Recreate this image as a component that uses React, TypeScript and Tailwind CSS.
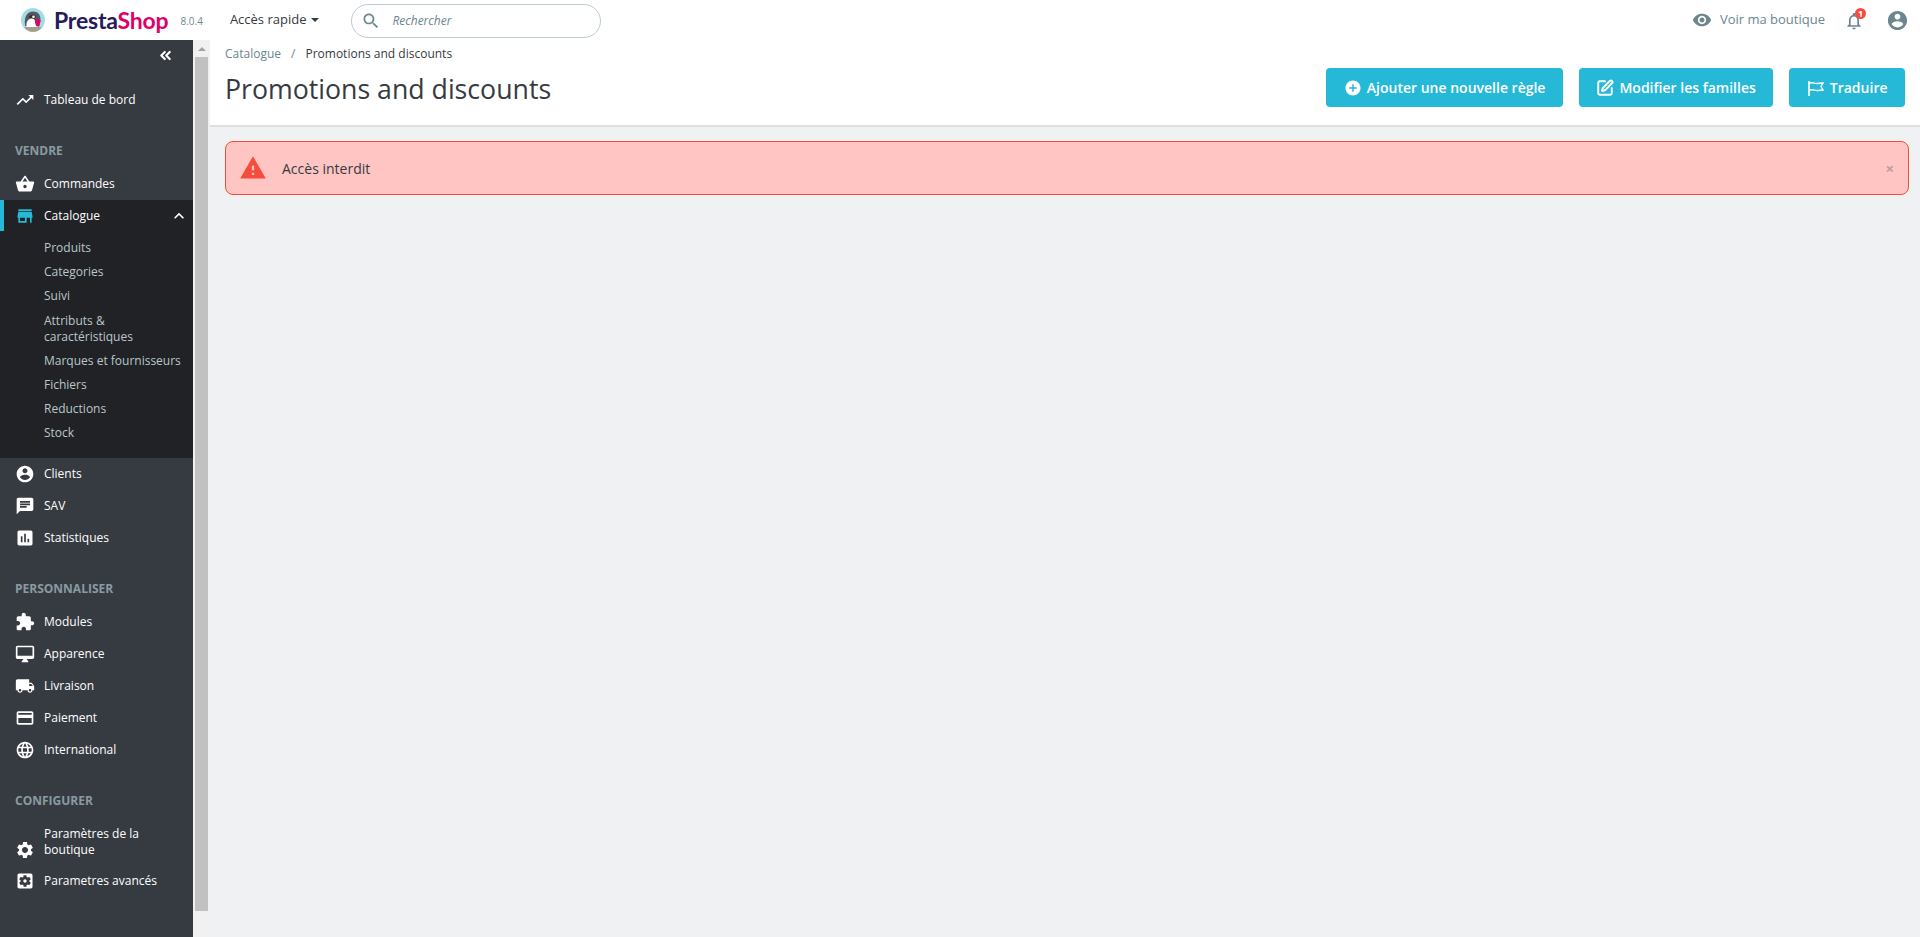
import { ChevronsLeft, SquarePen } from 'lucide-react';

const P = {
  trending: 'M16 6l2.29 2.29-4.88 4.88-4-4L2 16.59 3.41 18l6-6 4 4 6.3-6.29L22 12V6z',
  basket: 'M17.21 9l-4.38-6.56c-.19-.28-.51-.42-.83-.42-.32 0-.64.14-.83.43L6.79 9H2c-.55 0-1 .45-1 1 0 .09.01.18.04.27l2.54 9.27c.23.84 1 1.46 1.92 1.46h13c.92 0 1.69-.62 1.93-1.46l2.54-9.27L23 10c0-.55-.45-1-1-1h-4.79zM9 9l3-4.4L15 9H9zm3 8c-1.1 0-2-.9-2-2s.9-2 2-2 2 .9 2 2-.9 2-2 2z',
  store: 'M20 4H4v2h16V4zm1 10v-2l-1-5H4l-1 5v2h1v6h10v-6h4v6h2v-6h1zm-9 4H6v-4h6v4z',
  account: 'M12 2C6.48 2 2 6.48 2 12s4.48 10 10 10 10-4.48 10-10S17.52 2 12 2zm0 3c1.66 0 3 1.34 3 3s-1.34 3-3 3-3-1.34-3-3 1.34-3 3-3zm0 14.2c-2.5 0-4.71-1.28-6-3.22.03-1.99 4-3.08 6-3.08 1.99 0 5.97 1.09 6 3.08-1.29 1.94-3.5 3.22-6 3.22z',
  chat: 'M20 2H4c-1.1 0-1.99.9-1.99 2L2 22l4-4h14c1.1 0 2-.9 2-2V4c0-1.1-.9-2-2-2zM6 9h12v2H6V9zm8 5H6v-2h8v2zm4-6H6V6h12v2z',
  stats: 'M19 3H5c-1.1 0-2 .9-2 2v14c0 1.1.9 2 2 2h14c1.1 0 2-.9 2-2V5c0-1.1-.9-2-2-2zM9 17H7v-7h2v7zm4 0h-2V7h2v10zm4 0h-2v-4h2v4z',
  puzzle: 'M20.5 11H19V7c0-1.1-.9-2-2-2h-4V3.5C13 2.12 11.88 1 10.5 1S8 2.12 8 3.5V5H4c-1.1 0-1.99.9-1.99 2v3.8H3.5c1.49 0 2.7 1.21 2.7 2.7s-1.21 2.7-2.7 2.7H2V20c0 1.1.9 2 2 2h3.8v-1.5c0-1.49 1.21-2.7 2.7-2.7 1.49 0 2.7 1.21 2.7 2.7V22H17c1.1 0 2-.9 2-2v-4h1.5c1.38 0 2.5-1.12 2.5-2.5S21.88 11 20.5 11z',
  desktop: 'M21 2H3c-1.1 0-2 .9-2 2v12c0 1.1.9 2 2 2h7l-2 3v1h8v-1l-2-3h7c1.1 0 2-.9 2-2V4c0-1.1-.9-2-2-2zm0 12H3V4h18v10z',
  truck: 'M20 8h-3V4H3c-1.1 0-2 .9-2 2v11h2c0 1.66 1.34 3 3 3s3-1.34 3-3h6c0 1.66 1.34 3 3 3s3-1.34 3-3h2v-5l-3-4zM6 18.5c-.83 0-1.5-.67-1.5-1.5s.67-1.5 1.5-1.5 1.5.67 1.5 1.5-.67 1.5-1.5 1.5zm13.5-9l1.96 2.5H17V9.5h2.5zm-1.5 9c-.83 0-1.5-.67-1.5-1.5s.67-1.5 1.5-1.5 1.5.67 1.5 1.5-.67 1.5-1.5 1.5z',
  card: 'M20 4H4c-1.11 0-1.99.89-1.99 2L2 18c0 1.11.89 2 2 2h16c1.11 0 2-.89 2-2V6c0-1.11-.89-2-2-2zm0 14H4v-6h16v6zm0-10H4V6h16v2z',
  globe: 'M11.99 2C6.47 2 2 6.48 2 12s4.47 10 9.99 10C17.52 22 22 17.52 22 12S17.52 2 11.99 2zm6.93 6h-2.95c-.32-1.25-.78-2.45-1.38-3.56 1.84.63 3.37 1.91 4.33 3.56zM12 4.04c.83 1.2 1.48 2.53 1.91 3.96h-3.82c.43-1.43 1.08-2.76 1.91-3.96zM4.26 14C4.1 13.36 4 12.69 4 12s.1-1.36.26-2h3.38c-.08.66-.14 1.32-.14 2 0 .68.06 1.34.14 2H4.26zm.82 2h2.95c.32 1.25.78 2.45 1.38 3.56-1.84-.63-3.37-1.9-4.33-3.56zm2.95-8H5.08c.96-1.66 2.49-2.93 4.33-3.56C8.81 5.55 8.35 6.75 8.03 8zM12 19.96c-.83-1.2-1.48-2.53-1.91-3.96h3.82c-.43 1.43-1.08 2.76-1.91 3.96zM14.34 14H9.66c-.09-.66-.16-1.32-.16-2 0-.68.07-1.35.16-2h4.68c.09.65.16 1.32.16 2 0 .68-.07 1.34-.16 2zm.25 5.56c.6-1.11 1.06-2.31 1.38-3.56h2.95c-.96 1.65-2.49 2.93-4.33 3.56zM16.36 14c.08-.66.14-1.32.14-2 0-.68-.06-1.34-.14-2h3.38c.16.64.26 1.31.26 2s-.1 1.36-.26 2h-3.38z',
  gear: 'M19.14 12.94c.04-.3.06-.61.06-.94 0-.32-.02-.64-.07-.94l2.03-1.58c.18-.14.23-.41.12-.61l-1.92-3.32c-.12-.22-.37-.29-.59-.22l-2.39.96c-.5-.38-1.03-.7-1.62-.94l-.36-2.54c-.04-.24-.24-.41-.48-.41h-3.84c-.24 0-.43.17-.47.41l-.36 2.54c-.59.24-1.13.57-1.62.94l-2.39-.96c-.22-.08-.47 0-.59.22L2.74 8.87c-.12.21-.08.47.12.61l2.03 1.58c-.05.3-.09.63-.09.94s.02.64.07.94l-2.03 1.58c-.18.14-.23.41-.12.61l1.92 3.32c.12.22.37.29.59.22l2.39-.96c.5.38 1.03.7 1.62.94l.36 2.54c.05.24.24.41.48.41h3.84c.24 0 .44-.17.47-.41l.36-2.54c.59-.24 1.13-.56 1.62-.94l2.39.96c.22.08.47 0 .59-.22l1.92-3.32c.12-.22.07-.47-.12-.61l-2.01-1.58zM12 15.6c-1.98 0-3.6-1.62-3.6-3.6s1.62-3.6 3.6-3.6 3.6 1.62 3.6 3.6-1.62 3.6-3.6 3.6z',
  gearBox: 'M12 10c-1.1 0-2 .9-2 2s.9 2 2 2 2-.9 2-2-.9-2-2-2zm7-7H5c-1.11 0-2 .89-2 2v14c0 1.11.89 2 2 2h14c1.11 0 2-.89 2-2V5c0-1.11-.89-2-2-2zm-1.75 9c0 .23-.02.46-.05.68l1.48 1.16c.13.11.17.3.08.45l-1.4 2.42c-.09.15-.27.21-.43.15l-1.74-.7c-.36.28-.76.51-1.18.69l-.26 1.85c-.03.17-.18.3-.35.3h-2.8c-.17 0-.32-.13-.35-.29l-.26-1.85c-.43-.18-.82-.41-1.18-.69l-1.74.7c-.16.06-.34 0-.43-.15l-1.4-2.42c-.09-.15-.05-.34.08-.45l1.48-1.16c-.03-.23-.05-.46-.05-.69 0-.23.02-.46.05-.68l-1.48-1.16c-.13-.11-.17-.3-.08-.45l1.4-2.42c.09-.15.27-.21.43-.15l1.74.7c.36-.28.76-.51 1.18-.69l.26-1.85c.03-.17.18-.3.35-.3h2.8c.17 0 .32.13.35.29l.26 1.85c.43.18.82.41 1.18.69l1.74-.7c.16-.06.34 0 .43.15l1.4 2.42c.09.15.05.34-.08.45l-1.48 1.16c.03.23.05.46.05.69z',
  eye: 'M12 4.5C7 4.5 2.73 7.61 1 12c1.73 4.39 6 7.5 11 7.5s9.27-3.11 11-7.5c-1.73-4.39-6-7.5-11-7.5zM12 17c-2.76 0-5-2.24-5-5s2.24-5 5-5 5 2.24 5 5-2.24 5-5 5zm0-8c-1.66 0-3 1.34-3 3s1.34 3 3 3 3-1.34 3-3-1.34-3-3-3z',
  bell: 'M12 22c1.1 0 2-.9 2-2h-4c0 1.1.9 2 2 2zm6-6v-5c0-3.07-1.63-5.64-4.5-6.32V4c0-.83-.67-1.5-1.5-1.5s-1.5.67-1.5 1.5v.68C7.64 5.36 6 7.92 6 11v5l-2 2v1h16v-1l-2-2zm-2 1H8v-6c0-2.48 1.51-4.5 4-4.5s4 2.02 4 4.5v6z',
  plus: 'M12 2C6.48 2 2 6.48 2 12s4.48 10 10 10 10-4.48 10-10S17.52 2 12 2zm5 11h-4v4h-2v-4H7v-2h4V7h2v4h4v2z',
  warning: 'M1 21h22L12 2 1 21zm12-3h-2v-2h2v2zm0-4h-2v-4h2v4z',
  search: 'M15.5 14h-.79l-.28-.27C15.41 12.59 16 11.11 16 9.5 16 5.91 13.09 3 9.5 3S3 5.91 3 9.5 5.91 16 9.5 16c1.61 0 3.09-.59 4.23-1.57l.27.28v.79l5 4.99L20.49 19l-4.99-5zm-6 0C7.01 14 5 11.99 5 9.5S7.01 5 9.5 5 14 7.01 14 9.5 11.99 14 9.5 14z',
  less: 'M12 8l-6 6 1.41 1.41L12 10.83l4.59 4.58L18 14z',
};

function Icon({ d, className }: { d: string; className?: string }) {
  return (
    <svg viewBox="0 0 24 24" fill="currentColor" className={className}>
      <path d={d} />
    </svg>
  );
}

// penguin badge of the logo
function Logo() {
  return (
    <svg viewBox="0 0 24 24" className="w-[24px] h-[24px] shrink-0">
      <circle cx="12" cy="12" r="12" fill="#a4dbe8" />
      <path d="M4 17C3 9 6 3.5 12 3.5c5 0 7.5 3.5 7.5 7.5l-1 7H4z" fill="#55585c" />
      <path d="M8 8.5c2-2.5 6-2.5 7 0l-1 2H9z" fill="#2e3136" />
      <path d="M6 20c-1.5-4 0-9 4-9.5 2.5-.3 4 1 4.5 3l1 6.5z" fill="#fff" />
      <circle cx="12.5" cy="8.8" r="1.3" fill="#fff" />
      <path d="M13.5 11l6.5 1.5-2.5 6.5-3-2.5z" fill="#df0067" />
      <path d="M3.5 19h17l-1.5 2.2C15 24.6 9 24.6 5 21.2z" fill="#a89c84" />
    </svg>
  );
}

function FlagIcon() {
  return (
    <svg viewBox="0 0 18 18" fill="none" stroke="currentColor" className="w-[18px] h-[18px]">
      <path d="M2 2v15" strokeWidth="1.7" />
      <path d="M3 4c3.5-1 4.5 1 7 .5s3.5-.5 6-.5l-2 3.5 2 3.5c-2.5 0-3.5.5-6 .5s-3.5-1.5-7-.5" strokeWidth="1.4" />
    </svg>
  );
}

function MenuItem({ d, label }: { d: string; label: string }) {
  return (
    <div className="flex items-center h-8 pl-[15px] text-white text-[12px] leading-[16px]">
      <Icon d={d} className="w-5 h-5 shrink-0" />
      <span className="ml-[9px] pr-3">{label}</span>
    </div>
  );
}

function SectionTitle({ label }: { label: string }) {
  return <div className="pl-[15px] mt-[27px] mb-[9px] text-[12px] leading-[16px] font-bold text-[#8a9aa1]">{label}</div>;
}

const subItems = ['Produits', 'Categories', 'Suivi', 'Attributs & caractéristiques', 'Marques et fournisseurs', 'Fichiers', 'Reductions', 'Stock'];

function Sidebar() {
  return (
    <aside className="w-[193px] shrink-0 bg-[#363a41] flex flex-col">
      <div className="flex justify-end pr-[19px] pt-[7px] h-[44px] text-white">
        <ChevronsLeft className="w-[17px] h-[17px]" strokeWidth={3} />
      </div>
      <MenuItem d={P.trending} label="Tableau de bord" />
      <SectionTitle label="VENDRE" />
      <MenuItem d={P.basket} label="Commandes" />
      <div className="bg-[#202226] pb-[16.6px]">
        <div className="flex items-center h-[31px] pl-[11px] pr-[4px] text-white text-[12px] border-l-4 border-[#25b9d7]">
          <Icon d={P.store} className="w-5 h-5 shrink-0 text-[#25b9d7]" />
          <span className="ml-[9px] flex-1">Catalogue</span>
          <Icon d={P.less} className="w-5 h-5 text-white" />
        </div>
        <ul className="flex flex-col gap-[8.2px] pl-[44px] pr-2 pt-[9px] text-[12px] leading-[16px] text-[#bcc6cb]">
          {subItems.map((item) => (
            <li key={item}>{item}</li>
          ))}
        </ul>
      </div>
      <MenuItem d={P.account} label="Clients" />
      <MenuItem d={P.chat} label="SAV" />
      <MenuItem d={P.stats} label="Statistiques" />
      <SectionTitle label="PERSONNALISER" />
      <MenuItem d={P.puzzle} label="Modules" />
      <MenuItem d={P.desktop} label="Apparence" />
      <MenuItem d={P.truck} label="Livraison" />
      <MenuItem d={P.card} label="Paiement" />
      <MenuItem d={P.globe} label="International" />
      <SectionTitle label="CONFIGURER" />
      <div className="flex items-center pt-[8px] pb-[7px] pl-[15px] text-white text-[12px] leading-[16px]">
        <Icon d={P.gear} className="w-5 h-5 shrink-0 translate-y-2" />
        <span className="ml-[9px] pr-3">Paramètres de la boutique</span>
      </div>
      <MenuItem d={P.gearBox} label="Parametres avancés" />
    </aside>
  );
}

function Scrollbar() {
  return (
    <div className="w-[17px] shrink-0 bg-[#f1f1f1] flex flex-col">
      <div className="h-[17px] flex items-center justify-center">
        <div className="w-0 h-0 border-x-[4px] border-x-transparent border-b-[4px] border-b-[#a3a3a3]" />
      </div>
      <div className="h-[854px] mx-[2px] bg-[#c1c1c1]" />
    </div>
  );
}

function Button({ icon, label }: { icon: React.ReactNode; label: string }) {
  return (
    <button className="h-[39px] px-[17.5px] flex items-center gap-[5px] rounded-[4px] bg-[#25b9d7] text-white text-[14px] font-semibold">
      {icon}
      {label}
    </button>
  );
}

export default function App() {
  return (
    <div className="h-[937px] overflow-hidden flex flex-col bg-white font-['Open_Sans',sans-serif] text-[#363a41]">
      <header className="h-10 shrink-0 flex items-center bg-white">
        <div className="ml-[21px] flex items-center">
          <Logo />
          <span className="ml-[9px] text-[23px] leading-none font-['Lato',sans-serif] font-bold tracking-[-0.2px] text-[#251b5b]">
            Presta<span className="text-[#df0067]">Shop</span>
          </span>
        </div>
        <span className="ml-[12px] mt-[2px] text-[10px] text-[#6c868e]">8.0.4</span>
        <div className="ml-[27px] flex items-center gap-[5px] text-[13px] text-[#363a41]">
          Accès rapide
          <span className="w-0 h-0 border-x-[4px] border-x-transparent border-t-[4px] border-t-[#363a41]" />
        </div>
        <div className="ml-[32px] mt-[2px] w-[250px] h-[34px] flex items-center rounded-full border border-[#bbcdd2] pl-[9px]">
          <Icon d={P.search} className="w-5 h-5 text-[#6c868e]" />
          <span className="ml-[11px] text-[12px] italic text-[#6c868e]">Rechercher</span>
        </div>
        <div className="ml-auto flex items-center pr-[11px]">
          <Icon d={P.eye} className="w-5 h-5 text-[#6c868e]" />
          <span className="ml-[8px] text-[13px] text-[#6c868e]">Voir ma boutique</span>
          <div className="relative ml-[19px] mt-[2px] w-5 h-5">
            <Icon d={P.bell} className="w-5 h-5 text-[#6c868e]" />
            <span className="absolute -top-[3px] left-[11px] w-[11px] h-[11px] rounded-full bg-[#f54c3e] text-white text-[9px] leading-[11px] font-bold text-center">1</span>
          </div>
          <Icon d={P.account} className="ml-[22px] w-[23px] h-[23px] text-[#6c868e]" />
        </div>
      </header>
      <div className="flex flex-1 min-h-0">
        <Sidebar />
        <Scrollbar />
        <main className="flex-1 bg-[#eff1f2] flex flex-col">
          <div className="h-[87px] bg-white border-b-2 border-[#dfdfdf] pl-[15px] pr-[15px] flex justify-between">
            <div>
              <div className="mt-[6px] text-[12px] leading-[16px]">
                <span className="text-[#6c868e]">Catalogue</span>
                <span className="mx-[10px] text-[#6c868e]">/</span>
                <span>Promotions and discounts</span>
              </div>
              <h1 className="mt-[8px] text-[26.7px] leading-[38px] text-[#363a41]">Promotions and discounts</h1>
            </div>
            <div className="mt-[28px] flex gap-4">
              <Button icon={<Icon d={P.plus} className="w-[18px] h-[18px]" />} label="Ajouter une nouvelle règle" />
              <Button icon={<SquarePen className="w-[18px] h-[18px]" strokeWidth={2.5} />} label="Modifier les familles" />
              <Button icon={<FlagIcon />} label="Traduire" />
            </div>
          </div>
          <div className="ml-[15px] mr-[11px] mt-[14px] h-[54px] flex items-center rounded-[8px] border border-[#f54c3e] bg-[#fec5c3] pl-[13px] pr-[14px]">
            <Icon d={P.warning} className="w-[28px] h-[28px] text-[#f54c3e] -mt-[1px]" />
            <span className="ml-[15px] text-[14px] text-[#363a41]">Accès interdit</span>
            <span className="ml-auto text-[#363a41] opacity-30 text-[15px] font-bold leading-none">×</span>
          </div>
        </main>
      </div>
    </div>
  );
}
